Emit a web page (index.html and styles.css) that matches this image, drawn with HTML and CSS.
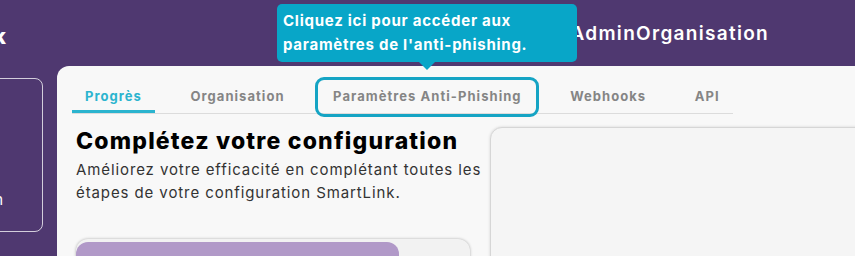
FILE: index.html
```html
<!DOCTYPE html>
<html lang="fr">
<head>
<meta charset="utf-8">
<title>SmartLink</title>
<link rel="stylesheet" href="styles.css">
</head>
<body>
<div class="app">
  <header class="topbar">
    <div class="logo">SmartLink</div>
    <div class="user">AdminOrganisation</div>
    <div class="tooltip">Cliquez ici pour accéder aux<br>paramètres de l'anti-phishing.</div>
  </header>
  <div class="main">
    <aside class="sidebar">
      <div class="side-card"><span class="side-label">Configuration</span></div>
    </aside>
    <section class="panel">
      <nav class="tabs">
        <div class="tab active">Progrès</div>
        <div class="tab">Organisation</div>
        <div class="tab highlight">Paramètres Anti-Phishing</div>
        <div class="tab">Webhooks</div>
        <div class="tab">API</div>
      </nav>
      <div class="content">
        <div class="left">
          <h1 class="title">Complétez votre configuration</h1>
          <p class="desc">Améliorez votre efficacité en complétant toutes les étapes de votre configuration SmartLink.</p>
          <div class="progress"><div class="progress-fill" style="width: 82%"></div></div>
        </div>
        <div class="right-card"></div>
      </div>
    </section>
  </div>
</div>
</body>
</html>
```
FILE: styles.css
```css
* { box-sizing: border-box; }
html, body { margin: 0; padding: 0; }
body {
  width: 855px;
  height: 256px;
  overflow: hidden;
  background: #4f3870;
  font-family: Inter, "Open Sans", "Liberation Sans", sans-serif;
}
.app { width: 855px; height: 256px; overflow: hidden; }
.topbar {
  position: relative;
  height: 66px;
  display: flex;
  align-items: center;
  justify-content: space-between;
  padding-right: 86px;
}
.logo {
  width: 120px;
  margin-left: -114px;
  text-align: right;
  color: #fff;
  font-weight: 800;
  font-size: 21px;
  margin-top: 6px;
}
.user {
  color: #fff;
  font-weight: 600;
  font-size: 19px;
  letter-spacing: 1.3px;
}
.tooltip {
  position: absolute;
  left: 277px;
  top: 4px;
  width: 300px;
  height: 58px;
  background: #08a6c8;
  border-radius: 5px;
  color: #fff;
  font-weight: 700;
  font-size: 15px;
  letter-spacing: 0.75px;
  line-height: 24px;
  padding: 5px 6px;
  z-index: 5;
}
.tooltip::after {
  content: "";
  position: absolute;
  left: 142px;
  top: 58px;
  border-left: 8px solid transparent;
  border-right: 8px solid transparent;
  border-top: 8px solid #08a6c8;
}
.main { display: flex; height: 190px; }
.sidebar { width: 57px; flex: none; }
.side-card {
  width: 200px;
  margin-left: -157px;
  margin-top: 12px;
  height: 154px;
  border: 1px solid rgba(255,255,255,0.75);
  border-radius: 8px;
  display: flex;
  align-items: flex-end;
  justify-content: flex-end;
  padding: 0 38px 22px 0;
}
.side-label { color: #fff; font-size: 15px; letter-spacing: 0.8px; }
.panel {
  flex: 1;
  background: #f8f8f8;
  border-top-left-radius: 12px;
  padding: 14px 0 0 15px;
  overflow: hidden;
}
.tabs {
  display: flex;
  width: max-content;
  gap: 22.5px;
  border-bottom: 1px solid #dcdcdc;
}
.tab {
  position: relative;
  height: 33px;
  line-height: 33px;
  padding: 0 13px;
  font-size: 13px;
  font-weight: 700;
  color: #858585;
  letter-spacing: 1.05px;
}
.tab.active { color: #2bb4cf; box-shadow: inset 0 -3px 0 #2bb4cf; }
.tab.highlight::after {
  content: "";
  position: absolute;
  top: -3px; bottom: -4px; left: -5px; right: -4px;
  border: 3px solid #15a4c4;
  border-radius: 9px;
}
.content { display: flex; margin-top: 13px; }
.left { width: 418px; flex: none; padding-left: 4px; }
.title {
  margin: 0;
  font-size: 23px;
  line-height: 28px;
  font-weight: 800;
  letter-spacing: 1.2px;
  color: #000;
}
.desc {
  margin: 3px 0 0;
  font-size: 15px;
  line-height: 23px;
  letter-spacing: 0.9px;
  color: #333;
}
.progress {
  margin-top: 35px;
  height: 30px;
  width: 394px;
  border-radius: 12px;
  background: #f2f2f2;
  box-shadow: 0 0 3px rgba(0,0,0,0.3);
  padding-top: 3px;
}
.progress-fill { height: 27px; background: #b199c8; border-radius: 12px 12px 0 0; }
.right-card {
  flex: none;
  width: 400px;
  height: 200px;
  border: 1px solid #d6d6d6;
  border-radius: 12px;
  background: #f5f5f5;
  box-shadow: 0 0 3px rgba(0,0,0,0.15);
}
```
